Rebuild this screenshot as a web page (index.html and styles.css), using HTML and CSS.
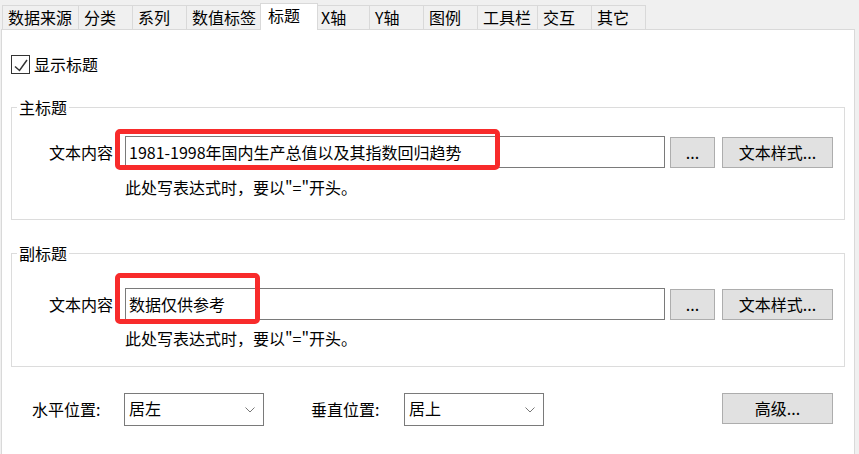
FILE: index.html
```html
<!DOCTYPE html>
<html lang="zh-CN">
<head>
<meta charset="utf-8">
<title>标题</title>
<link rel="stylesheet" href="styles.css">
</head>
<body>
<div class="tabs">
  <div class="tab">数据来源</div>
  <div class="tab">分类</div>
  <div class="tab">系列</div>
  <div class="tab">数值标签</div>
  <div class="tab active">标题</div>
  <div class="tab">X轴</div>
  <div class="tab">Y轴</div>
  <div class="tab">图例</div>
  <div class="tab">工具栏</div>
  <div class="tab">交互</div>
  <div class="tab">其它</div>
</div>
<div class="panel">
  <div class="check-row">
    <span class="checkbox"><svg width="17" height="17" viewBox="0 0 17 17"><path d="M3 10.5 L7.5 14.5 L15 4" fill="none" stroke="#333" stroke-width="1.5"/></svg></span>
    <span class="check-label">显示标题</span>
  </div>
  <fieldset class="group">
    <legend>主标题</legend>
    <div class="field-row">
      <span class="field-label">文本内容</span>
      <div class="text-input">1981-1998年国内生产总值以及其指数回归趋势</div>
      <div class="btn btn-dots">...</div>
      <div class="btn btn-style">文本样式...</div>
    </div>
    <div class="hint">此处写表达式时，要以"="开头。</div>
  </fieldset>
  <fieldset class="group group-sub">
    <legend>副标题</legend>
    <div class="field-row">
      <span class="field-label">文本内容</span>
      <div class="text-input">数据仅供参考</div>
      <div class="btn btn-dots">...</div>
      <div class="btn btn-style">文本样式...</div>
    </div>
    <div class="hint">此处写表达式时，要以"="开头。</div>
  </fieldset>
  <div class="pos-row">
    <span class="pos-label pos-h">水平位置:</span>
    <div class="select"><span>居左</span><svg width="10" height="6" viewBox="0 0 10 6"><path d="M0.5 0.5 L5 5 L9.5 0.5" fill="none" stroke="#777" stroke-width="1"/></svg></div>
    <span class="pos-label pos-v">垂直位置:</span>
    <div class="select"><span>居上</span><svg width="10" height="6" viewBox="0 0 10 6"><path d="M0.5 0.5 L5 5 L9.5 0.5" fill="none" stroke="#777" stroke-width="1"/></svg></div>
    <div class="btn btn-adv">高级...</div>
  </div>
</div>
<div class="mark mark-main"></div>
<div class="mark mark-sub"></div>
</body>
</html>
```
FILE: styles.css
```css
* { box-sizing: border-box; }
html, body {
  margin: 0;
  padding: 0;
  width: 859px;
  height: 454px;
  overflow: hidden;
}
body {
  background: #f0f0f0;
  font-family: "Noto Sans CJK SC", "Microsoft YaHei", sans-serif;
  font-size: 16px;
  color: #000;
  position: relative;
}
.tabs {
  display: flex;
  align-items: flex-end;
  height: 29px;
  padding-left: 2px;
}
.tab {
  height: 24px;
  min-width: 54px;
  padding: 0 6px 0 5px;
  line-height: 22px;
  background: #f0f0f0;
  border-top: 1px solid #d9d9d9;
  border-right: 1px solid #d9d9d9;
  white-space: nowrap;
}
.tab:first-child { border-left: 1px solid #d9d9d9; }
.tab.active {
  position: relative;
  z-index: 1;
  height: 27px;
  min-width: 58px;
  margin: 0 -2px -1px -3px;
  padding-left: 7px;
  background: #fff;
  border-left: 1px solid #d9d9d9;
}
.panel {
  margin-left: 1px;
  width: 854px;
  height: 440px;
  background: #fff;
  border: 1px solid #d9d9d9;
  padding: 0 9px;
}
.check-row {
  display: flex;
  align-items: center;
  margin-top: 25px;
  height: 19px;
}
.checkbox {
  width: 19px;
  height: 19px;
  border: 1px solid #333;
  margin-right: 4px;
  display: flex;
}
.check-label { line-height: 19px; }
.group {
  margin: 22px 0 0;
  padding: 0;
  border: 1px solid #dcdcdc;
  min-inline-size: 0;
}
.group legend {
  margin-left: 5px;
  padding: 0 2px;
  line-height: 22px;
}
.field-row {
  display: flex;
  align-items: center;
  height: 32px;
  margin-top: 18px;
}
.group-sub .field-row { margin-top: 24px; }
.field-label {
  width: 101px;
  margin-right: 12px;
  text-align: right;
  white-space: nowrap;
}
.text-input {
  width: 540px;
  height: 32px;
  border: 1px solid #7a7a7a;
  padding-left: 3px;
  line-height: 30px;
  white-space: nowrap;
  overflow: hidden;
}
.btn {
  height: 31px;
  background: #e1e1e1;
  border: 1px solid #adadad;
  text-align: center;
  line-height: 29px;
  white-space: nowrap;
}
.btn-dots { width: 45px; margin-left: 5px; }
.btn-style { width: 111px; margin-left: 7px; }
.hint {
  margin: 9px 0 22px 113px;
  line-height: 20px;
  white-space: nowrap;
}
.group-sub .hint { margin: 8px 0 18px 113px; }
.pos-row {
  display: flex;
  align-items: flex-start;
  margin-top: 26px;
  padding-right: 12px;
}
.pos-label {
  line-height: 33px;
  white-space: nowrap;
}
.pos-h { margin-left: 21px; width: 92px; }
.pos-v { margin-left: 47px; width: 93px; }
.select {
  width: 140px;
  height: 33px;
  border: 1px solid #7a7a7a;
  display: flex;
  align-items: center;
  justify-content: space-between;
  padding: 0 8px 0 4px;
}
.select span { line-height: 31px; margin-top: -2px; }
.btn-adv { width: 111px; margin-left: auto; }
.mark {
  position: absolute;
  border: 5px solid #f82b2b;
  border-radius: 5px;
  z-index: 2;
}
.mark-main { left: 115px; top: 129px; width: 385px; height: 41px; }
.mark-sub { left: 115px; top: 273px; width: 145px; height: 51px; }
```
